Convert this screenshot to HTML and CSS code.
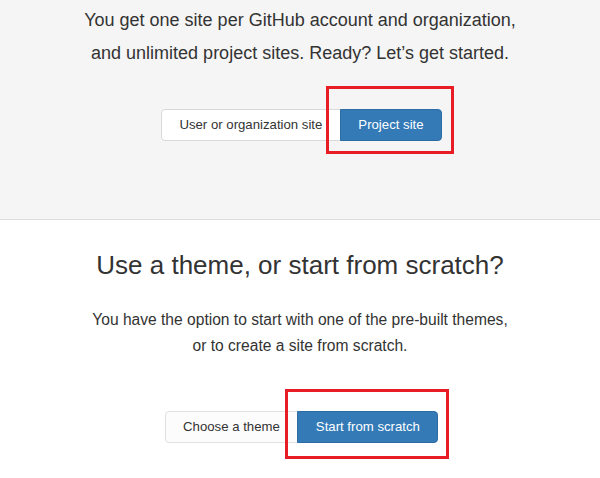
FILE: index.html
```html
<!DOCTYPE html>
<html lang="en">
<head>
<meta charset="utf-8">
<title>GitHub Pages</title>
<link rel="stylesheet" href="styles.css">
</head>
<body>
  <section class="intro">
    <p class="lead">You get one site per GitHub account and organization,<br>and unlimited project sites. Ready? Let’s get started.</p>
    <div class="btn-group">
      <button class="btn btn-default">User or organization site</button>
      <button class="btn btn-primary">Project site<span class="callout callout-one"></span></button>
    </div>
  </section>
  <section class="choice">
    <h2 class="title">Use a theme, or start from scratch?</h2>
    <p class="desc">You have the option to start with one of the pre-built themes,<br>or to create a site from scratch.</p>
    <div class="btn-group btn-group-two">
      <button class="btn btn-default btn-soft">Choose a theme</button>
      <button class="btn btn-primary">Start from scratch<span class="callout callout-two"></span></button>
    </div>
  </section>
</body>
</html>
```

FILE: styles.css
```css
html, body {
  margin: 0;
  padding: 0;
  background: #fff;
}
body {
  font-family: "Liberation Sans", Arial, sans-serif;
  color: #333;
  min-height: 478px;
}
.intro {
  background: #f5f5f5;
  border-bottom: 1px solid #ddd;
  box-sizing: border-box;
  height: 220px;
  padding-top: 4px;
  text-align: center;
}
.lead {
  margin: 0;
  font-size: 18px;
  line-height: 33px;
}
.btn-group {
  display: inline-flex;
  margin-top: 39px;
  margin-left: 3px;
}
.btn {
  position: relative;
  overflow: visible;
  font-family: "Liberation Sans", Arial, sans-serif;
  font-size: 13.2px;
  line-height: 16px;
  padding: 7px 17.5px;
  border: 1px solid #ccc;
  margin: 0;
  cursor: pointer;
}
.btn-default {
  background: #fff;
  color: #333;
  border-color: #d9d9d9;
  border-radius: 4px 0 0 4px;
}
.btn-soft {
  background: #fcfcfc;
  border-color: #e0e0e0;
}
.btn-primary {
  background: #337ab7;
  color: #fff;
  border-color: #2e6da4;
  border-radius: 0 4px 4px 0;
  margin-left: -1px;
}
.callout {
  position: absolute;
  border: 3px solid #e81c24;
  pointer-events: none;
}
.callout-one {
  top: -24px;
  left: -15px;
  right: -13px;
  bottom: -14px;
}
.callout-two {
  top: -23px;
  left: -13px;
  right: -12px;
  bottom: -17px;
}
.choice {
  text-align: center;
  padding-top: 30px;
  padding-bottom: 30px;
}
.title {
  margin: 0;
  font-size: 26px;
  font-weight: normal;
  line-height: 30px;
}
.desc {
  margin: 27px 0 0;
  font-size: 15.6px;
  line-height: 26px;
}
.btn-group-two {
  margin-top: 52px;
}
```
